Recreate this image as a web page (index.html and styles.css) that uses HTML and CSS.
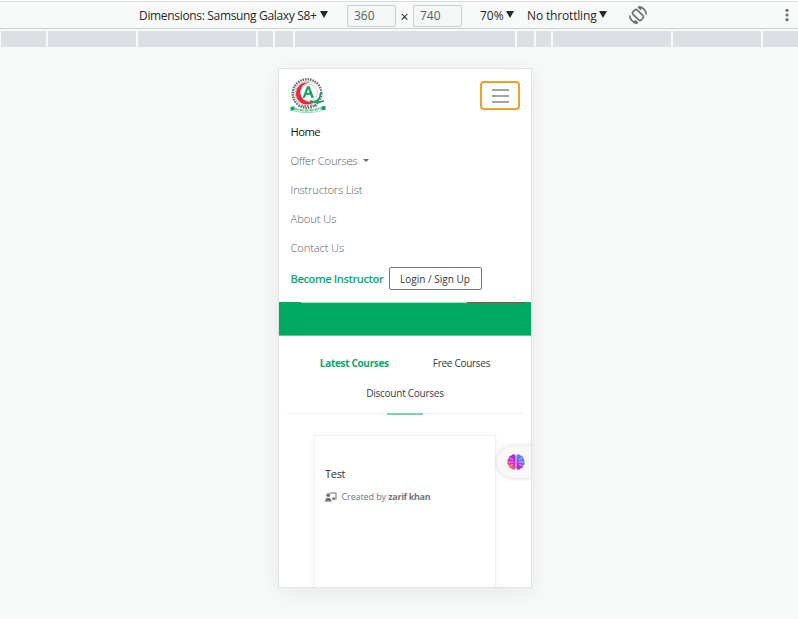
FILE: index.html
```html
<!DOCTYPE html>
<html lang="en">
<head>
<meta charset="utf-8">
<title>Device preview</title>
<link rel="stylesheet" href="styles.css">
</head>
<body>
<header class="toolbar">
  <span class="device">Dimensions: Samsung Galaxy S8+</span><i class="arrow"></i>
  <span class="size">360</span><span class="times">×</span><span class="size">740</span>
  <span class="zoom">70%</span><i class="arrow"></i>
  <span class="throttle">No throttling</span><i class="arrow"></i>
  <svg class="rotate" viewBox="0 0 20 20" fill="none" stroke="#6e7276" stroke-width="1.7">
    <rect x="7" y="4.2" width="6" height="11.6" rx="1.8" transform="rotate(-45 10 10)"/>
    <path d="M10.500 1.700a8.200 8.200 0 0 1 7.800 7.800M9.500 18.300a8.200 8.200 0 0 1-7.800-7.800M10.200 1.800l3 2.700M9.800 18.200l-3-2.700"/>
  </svg>
  <svg class="dots" viewBox="0 0 4 14" fill="#6e7276"><circle cx="2" cy="2.3" r="1.600"/><circle cx="2" cy="7" r="1.600"/><circle cx="2" cy="11.700" r="1.600"/></svg>
</header>
<div class="ruler"><i></i><i></i><i></i><i></i><i></i><i></i><i></i><i></i><i></i><i></i><i></i></div>
<main class="phone">
  <div class="top">
    <svg class="logo" viewBox="0 0 36 36">
      <circle cx="17" cy="15.500" r="14.300" fill="none" stroke="#66666a" stroke-width="2.400" stroke-dasharray="1.500 1"/>
      <circle cx="17" cy="15.500" r="11.900" fill="none" stroke="#9a9a9c" stroke-width="1.400" stroke-dasharray=".8 .7"/>
      <circle cx="17" cy="15.500" r="11" fill="#e5283a"/>
      <circle cx="20.200" cy="14.300" r="9.800" fill="#fff"/>
      <circle cx="19" cy="14.500" r="8.500" fill="#fff" stroke="#b9aeb0" stroke-width=".6"/>
      <path d="M12.600 19.700 17 8.300h2.600l4.400 11.400h-2.700l-1-2.900h-4.200l-1 2.900zM16.800 14.700h2.800l-1.400-4z" fill="#12a35c"/>
      <path d="M30.500 15q0 7-6.500 9M20 23q7 2.500 14-.3" fill="none" stroke="#12a35c" stroke-width="1.600"/>
      <path d="M5 30.700q13 4 26-.7" fill="none" stroke="#6fc69c" stroke-width="2.200" stroke-dasharray="3 .5 1 .5"/>
      <path d="M.5 29l4-.8v4l-4 .5zM35.500 28l-4 .2v4l4-.2z" fill="#12a35c"/>
      <path d="M4 33q13.500 3.500 28-.5" fill="none" stroke="#9bd6b8"/>
      <path d="M8 28h19" stroke="#888" stroke-width="1.300" stroke-dasharray="2 1"/>
    </svg>
    <span class="burger"><i></i><i></i><i></i></span>
  </div>
  <nav class="menu">
    <a class="home">Home</a>
    <a class="offer">Offer Courses<i class="caret"></i></a>
    <a class="list">Instructors List</a>
    <a class="about">About Us</a>
    <a class="contact">Contact Us</a>
  </nav>
  <div class="account"><b class="become">Become Instructor</b><span class="login">Login / Sign Up</span></div>
  <div class="banner"><i class="pale"></i><i class="red"></i></div>
  <div class="tabs">
    <div class="row"><b class="latest">Latest Courses</b><span class="free">Free Courses</span></div>
    <div class="row"><span class="discount">Discount Courses</span></div>
    <i class="mark"></i>
  </div>
  <article class="card">
    <h2>Test</h2>
    <p><svg class="teacher" viewBox="0 0 12 10" fill="#74747c"><path d="M4 .5h7.500v7H7V6.500h3.500v-5H5z"/><path d="M7.500 5.500h2.500v2H7.500z"/><circle cx="3.200" cy="3.200" r="1.900"/><path d="M0 9.500q0-3.800 3.200-3.800t3.400 3.800z"/></svg><span class="created">Created by </span><b class="author">zarif khan</b></p>
  </article>
  <div class="assist">
    <svg viewBox="0 0 18 18">
      <defs>
        <linearGradient id="l" x1=".6" y1="0" x2=".2" y2="1"><stop offset="0" stop-color="#a32be0"/><stop offset=".5" stop-color="#d92bc0"/><stop offset="1" stop-color="#ff9a2e"/></linearGradient>
        <linearGradient id="r" x1=".8" y1="0" x2=".2" y2="1"><stop offset="0" stop-color="#25b0f5"/><stop offset=".45" stop-color="#7b6af0"/><stop offset="1" stop-color="#d412c8"/></linearGradient>
      </defs>
      <path fill="url(#l)" d="M8.600 2.500v13Q6.500 18 4.500 15.500 2 15.500 2 13-.5 11.500.8 9-.3 6.500 2 5.200 2 2.500 4.500 2.500 6.500 0 8.600 2.500z"/>
      <path fill="url(#r)" d="M9.400 2.500v13q2.100 2.500 4.100 0 2.500 0 2.500-2.500 2.500-1.500 1.200-4 1.100-2.500-1.200-3.800 0-2.700-2.500-2.700-2-2.500-4.100 0z"/>
      <path fill="none" stroke="#fff" stroke-opacity=".65" stroke-width=".8" d="M1.500 9h5M3 5.500l3 1M3 12.500l3-1M11.500 9h5M12 6.500l3-1M12 11.500l3 1"/>
    </svg>
  </div>
</main>
</body>
</html>
```
FILE: styles.css
```css
* { box-sizing: border-box; }
body { margin: 0; height: 619px; overflow: hidden; background: #f8faf9; font-family: "Open Sans", "Noto Sans", sans-serif; font-size: 12px; color: #25272b; }
i { display: block; flex: none; }
svg { display: block; flex: none; }
.toolbar { height: 29px; border-bottom: 1px solid #cacdd1; display: flex; align-items: center; padding: 3px 0 0 139px; box-shadow: inset 0 1px #fff, inset 0 2px #dadcdc; white-space: nowrap; line-height: 20px; }
.device { width: 181px; letter-spacing: -.33px; }
.arrow { width: 8px; height: 7px; background: #25272b; clip-path: polygon(0 0, 100% 0, 50% 100%); margin-top: -2px; }
.size { width: 49px; height: 22px; border: 1px solid #cacdce; border-radius: 2px; background: #f5f6f6; color: #5e6063; padding-left: 6px; line-height: 20px; }
.arrow + .size { margin-left: 19px; }
.times { width: 17px; text-align: center; padding-top: 3px; font-size: 14px; }
.zoom { margin-left: 18px; width: 26px; }
.throttle { margin-left: 13px; width: 72px; letter-spacing: -.16px; }
.rotate { width: 20px; height: 20px; margin: -2px 0 0 21px; }
.dots { width: 4px; height: 14px; margin: -2px 0 0 137px; }
.ruler { display: grid; grid-template-columns: 45px 88px 118px 15px 18px 220px 17px 15px 118px 88px 35px; gap: 2px; padding: 2px 0 0 1px; height: 18px; }
.ruler i { background: #dddfe4; }
.phone { position: relative; width: 254px; height: 520px; margin: 21px 0 0 278px; border: 1px solid #e0e3e3; background: #fff; box-shadow: 0 4px 22px rgba(0,0,0,.08); overflow: hidden; display: flex; flex-direction: column; }
.top { display: flex; justify-content: space-between; padding: 9px 11px 0; height: 48px; }
.logo { width: 36px; height: 36px; }
.burger { width: 40px; height: 29px; margin-top: 3px; border: 2px solid #f0a027; border-radius: 4px; display: flex; flex-direction: column; align-items: center; justify-content: center; gap: 4px; }
.burger i { width: 17px; height: 2px; background: #a0a2a3; }
.menu { display: flex; flex-direction: column; padding: 0 11.5px; color: #5c5e62; font-size: 11.2px; font-weight: 300; }
.menu a { height: 29px; line-height: 29px; display: flex; align-items: center; }
.menu .home { color: #111; font-weight: 400; letter-spacing: -.5px; }
.offer { letter-spacing: -.22px; }
.list { letter-spacing: -.18px; }
.about { letter-spacing: -.06px; }
.contact { letter-spacing: -.15px; }
.caret { border: 3px solid transparent; border-top-color: #696a6d; border-bottom: 0; margin-left: 6px; }
.account { display: flex; align-items: center; height: 40px; padding: 0 0 7px 11.5px; }
.become { color: #12a573; font-size: 11.2px; font-weight: 600; letter-spacing: -.43px; width: 98px; white-space: nowrap; }
.login { width: 93px; height: 23px; border: 1px solid #75777a; border-radius: 2px; display: flex; align-items: center; justify-content: center; font-size: 10px; color: #35373c; }
.banner { height: 34px; background: #00a960; border-bottom: 1px solid #5fc796; display: flex; }
.pale { width: 166px; height: 1px; margin-left: 22px; background: #a9e3c8; }
.red { width: 56px; height: 1px; background: #b03b33; }
.tabs { margin: 12px 7px 0; height: 66px; border-bottom: 1px solid #f0f1f1; font-size: 10px; position: relative; color: #383a40; }
.row { height: 30px; display: flex; align-items: center; justify-content: center; gap: 44px; }
.latest { color: #0da66d; font-weight: 700; letter-spacing: -.32px; }
.free { letter-spacing: -.28px; }
.discount { letter-spacing: -.25px; }
.mark { width: 36px; height: 2px; position: absolute; left: 101px; bottom: -2px; background: #7ed0aa; }
.card { flex: 1; margin: 21px 35px 0; border: 1px solid #f1f1f1; border-bottom: 0; box-shadow: 0 2px 8px rgba(0,0,0,.04); padding: 29px 10px 0; }
h2 { font-size: 11px; font-weight: 400; letter-spacing: -.3px; margin: 0; line-height: 18px; color: #303238; }
p { display: flex; align-items: center; margin: 7px 0 0; font-size: 9px; line-height: 14px; color: #74747c; white-space: pre; }
.teacher { width: 12px; height: 10px; margin-right: 4.5px; }
.created { letter-spacing: -.1px; }
.author { letter-spacing: -.33px; }
.assist { position: absolute; left: 218px; top: 377px; width: 40px; height: 32px; border-radius: 16px 0 0 16px; background: #f8f8f8; box-shadow: 0 0 5px rgba(0,0,0,.16); padding: 7px 0 0 10px; }
.assist svg { width: 18px; height: 18px; }
```
